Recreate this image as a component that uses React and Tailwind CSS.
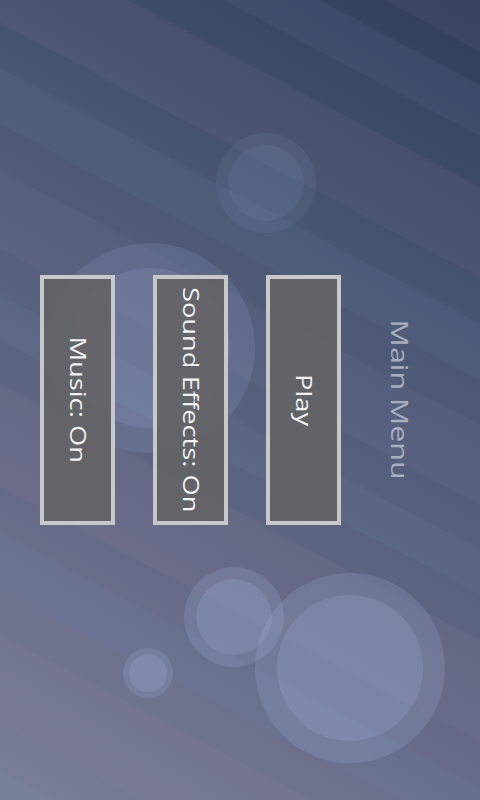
import React from 'react';

const stripes = [
  { y: -420, h: 60, c: '#8a7fb0', o: 0.09 },
  { y: -330, h: 40, c: '#6f8fb8', o: 0.08 },
  { y: -250, h: 70, c: '#9a86b0', o: 0.08 },
  { y: -150, h: 45, c: '#7fa0c0', o: 0.08 },
  { y: -60, h: 80, c: '#a08aa8', o: 0.08 },
  { y: 60, h: 50, c: '#7095bb', o: 0.08 },
  { y: 150, h: 70, c: '#9a86b0', o: 0.09 },
  { y: 260, h: 40, c: '#7fa0c0', o: 0.08 },
  { y: 340, h: 90, c: '#a08aa8', o: 0.08 },
  { y: 470, h: 50, c: '#6f8fb8', o: 0.09 },
  { y: 560, h: 80, c: '#9a86b0', o: 0.09 },
  { y: 680, h: 50, c: '#7fa0c0', o: 0.08 },
  { y: 770, h: 70, c: '#a08aa8', o: 0.08 },
];

const bubbles = [
  { x: 266, y: 183, r: 50, ri: 38, o: 0.07 },
  { x: 150, y: 348, r: 105, ri: 80, o: 0.13 },
  { x: 234, y: 617, r: 50, ri: 38, o: 0.17 },
  { x: 148, y: 673, r: 25, ri: 19, o: 0.17 },
  { x: 350, y: 668, r: 95, ri: 73, o: 0.17 },
];

function Backdrop() {
  return (
    <svg className="absolute inset-0" width="480" height="800" viewBox="0 0 480 800">
      <defs>
        <linearGradient id="bg" x1="480" y1="0" x2="0" y2="800" gradientUnits="userSpaceOnUse">
          <stop offset="0" stopColor="#2f3c5a" />
          <stop offset="0.3" stopColor="#485572" />
          <stop offset="0.7" stopColor="#656a88" />
          <stop offset="1" stopColor="#7a7e97" />
        </linearGradient>
      </defs>
      <rect width="480" height="800" fill="url(#bg)" />
      <g transform="rotate(28 0 0)">
        {stripes.map((s, i) => (
          <rect key={i} x="-600" y={s.y} width="1800" height={s.h} fill={s.c} opacity={s.o} />
        ))}
      </g>
      {bubbles.map((b, i) => (
        <g key={i} fill="#b0c2ec">
          <circle cx={b.x} cy={b.y} r={b.r} opacity={b.o} />
          <circle cx={b.x} cy={b.y} r={b.ri} opacity={b.o} />
        </g>
      ))}
    </svg>
  );
}

function MenuButton({ label }) {
  return (
    <button className="flex h-[250px] w-[75px] shrink-0 items-center justify-center border-4 border-[#c8c8c8] bg-[#636366]/[0.93]">
      <span className="scale-y-[1.3] text-[21px] leading-none text-[#f2f2f2] [writing-mode:vertical-rl]">
        {label}
      </span>
    </button>
  );
}

export default function App() {
  return (
    <div
      className="relative h-[800px] w-[480px] overflow-hidden bg-[#4f5a75]"
      style={{ fontFamily: '"Open Sans", "Noto Sans", sans-serif' }}
    >
      <Backdrop />
      <div className="relative flex h-full items-center gap-[38px] pl-[40px]">
        <MenuButton label="Music: On" />
        <MenuButton label="Sound Effects: On" />
        <MenuButton label="Play" />
        <h1 className="ml-[9px] scale-y-[1.32] text-[23px] leading-none text-[#a9aebc] [writing-mode:vertical-rl]">
          Main Menu
        </h1>
      </div>
    </div>
  );
}
